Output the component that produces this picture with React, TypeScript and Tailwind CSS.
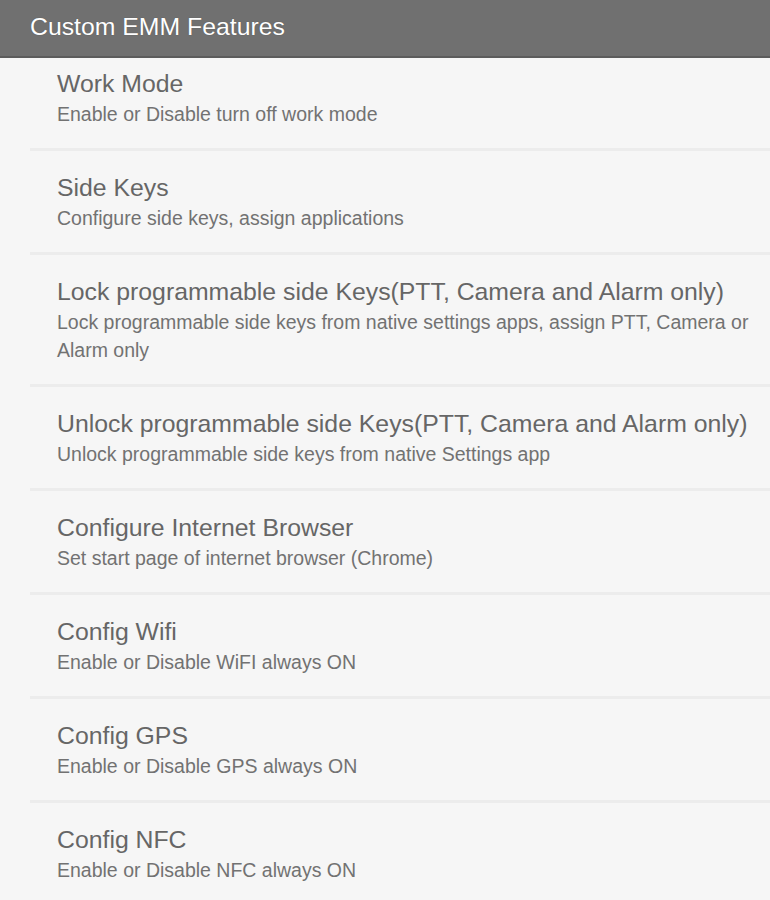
const features = [
  { title: "Work Mode", desc: "Enable or Disable turn off work mode" },
  { title: "Side Keys", desc: "Configure side keys, assign applications" },
  {
    title: "Lock programmable side Keys(PTT, Camera and Alarm only)",
    desc: "Lock programmable side keys from native settings apps, assign PTT, Camera or Alarm only",
  },
  {
    title: "Unlock programmable side Keys(PTT, Camera and Alarm only)",
    desc: "Unlock programmable side keys from native Settings app",
  },
  { title: "Configure Internet Browser", desc: "Set start page of internet browser (Chrome)" },
  { title: "Config Wifi", desc: "Enable or Disable WiFI always ON" },
  { title: "Config GPS", desc: "Enable or Disable GPS always ON" },
  { title: "Config NFC", desc: "Enable or Disable NFC always ON" },
];

export default function App() {
  return (
    <div className="w-[770px] h-[900px] overflow-hidden bg-[#f6f6f6] font-['Liberation_Sans',Arial,sans-serif]">
      <div className="h-[58px] flex items-center pb-[2px] pl-[30px] bg-[#707070] border-b-2 border-[#5c5c5c]">
        <h1 className="text-[24.8px] leading-8 text-white [text-shadow:0_0_1px_rgba(0,0,0,0.3)]">
          Custom EMM Features
        </h1>
      </div>
      <ul className="pl-[30px]">
        {features.map((f, i) => (
          <li
            key={f.title}
            className={`pl-[27px] pr-4 pb-5 border-b-[3px] border-[#ececec] ${i === 0 ? "pt-[9px]" : "pt-5"}`}
          >
            <div className="text-[24.8px] leading-[33px] text-[#666666]">{f.title}</div>
            <div className="text-[19.5px] leading-[28px] text-[#727272]">{f.desc}</div>
          </li>
        ))}
      </ul>
    </div>
  );
}
